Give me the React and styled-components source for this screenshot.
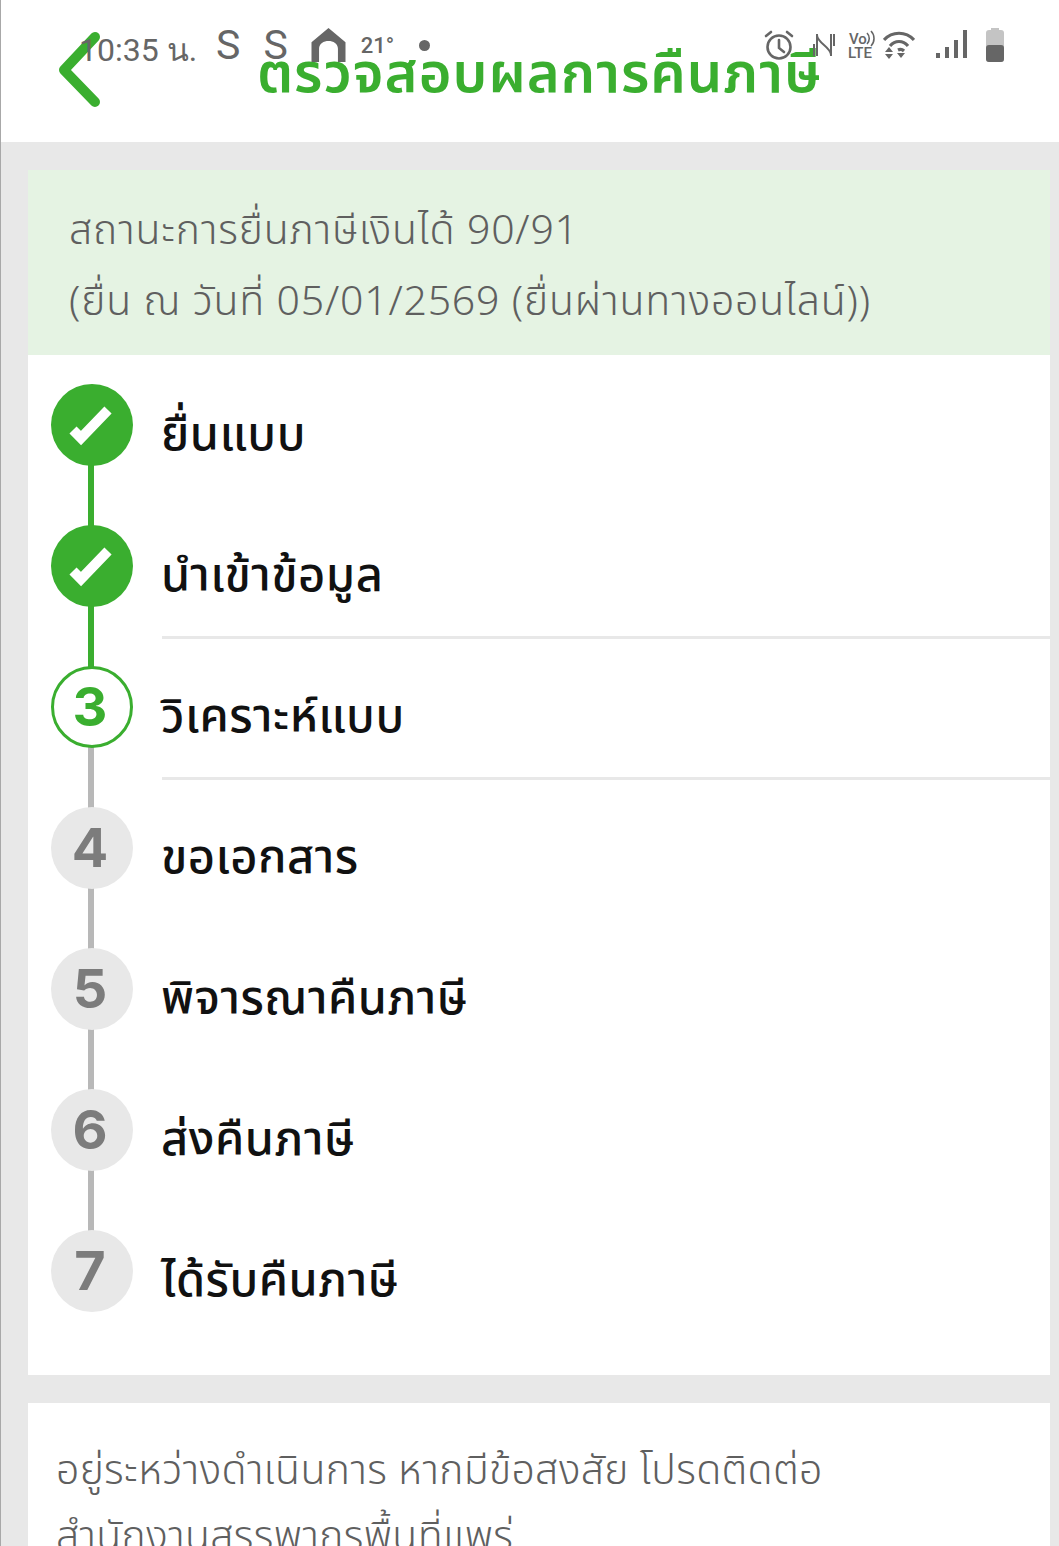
import React from 'react'
import styled, { createGlobalStyle } from 'styled-components'

const Global = createGlobalStyle`
html, body { margin: 0; padding: 0; background: #e8e8e8; }
body { font-family: "Noto Sans", "Noto Sans Thai", "Liberation Sans", sans-serif; }
`

const STEPS = [
  { label: 'ยื่นแบบ', state: 'done' },
  { label: 'นำเข้าข้อมูล', state: 'done' },
  { label: 'วิเคราะห์แบบ', state: 'current', line: true },
  { label: 'ขอเอกสาร', state: 'todo', line: true },
  { label: 'พิจารณาคืนภาษี', state: 'todo' },
  { label: 'ส่งคืนภาษี', state: 'todo' },
  { label: 'ได้รับคืนภาษี', state: 'todo' },
]

const Page = styled.div`
  position: relative;
  width: 1059px;
  height: 1546px;
  overflow: hidden;
  box-sizing: border-box;
  border-left: 1px solid #a8a8a8;
`
const Header = styled.header`
  height: 142px;
  background: #fff;
  display: flex;
  align-items: center;
  justify-content: center;
  position: relative;
`
const Back = styled.svg`
  position: absolute;
  left: 55px;
  top: 30px;
`
const Title = styled.h1`
  margin: 0 0 0 19px;
  font-size: 56px;
  line-height: 1.2;
  font-weight: 600;
  letter-spacing: 1px;
  color: #3aae2f;
`
const StatusBar = styled.div`
  position: absolute;
  top: 20px;
  left: 78px;
  right: 55px;
  height: 50px;
  display: flex;
  align-items: center;
  color: #666;
`
const Time = styled.span`
  font-family: Roboto, sans-serif;
  font-size: 32px;
  margin: 8px 19px 0 0;
  white-space: nowrap;
`
const Letter = styled.span`
  font-family: Roboto, sans-serif;
  font-size: 41px;
  margin-right: 23px;
`
const Temp = styled.span`
  font-family: Roboto, sans-serif;
  font-size: 22px;
  font-weight: 500;
  margin: 0 25px 0 15px;
`
const Dot = styled.span`
  width: 11px;
  height: 11px;
  border-radius: 50%;
  background: #666;
`
const Spacer = styled.div`
  flex: 1;
`
const Icons = styled.div`
  display: flex;
  align-items: center;
  gap: 8px;
`
const Content = styled.main`
  padding: 28px 9px 0 27px;
  display: flex;
  flex-direction: column;
  gap: 28px;
`
const Panel = styled.section`
  background: #fff;
`
const StatusBox = styled.div`
  background: #e5f3e3;
  height: 185px;
  box-sizing: border-box;
  padding: 23px 0 0 41px;
  color: #5f5f5f;
  font-size: 41px;
  line-height: 71px;
  font-weight: 300;
  letter-spacing: 0.8px;
`
const StepList = styled.ol`
  list-style: none;
  margin: -1px 0 0;
  padding: 0 0 34px 23px;
`
const Step = styled.li`
  height: 141px;
  display: flex;
  align-items: center;
  gap: 28px;
  position: relative;
`
const Circle = styled.div`
  position: relative;
  width: 82px;
  height: 82px;
  flex: none;
  box-sizing: border-box;
  border-radius: 50%;
  display: flex;
  align-items: center;
  justify-content: center;
  padding-right: 4px;
  font-family: Inter, sans-serif;
  font-size: 54px;
  font-weight: 700;
  background: ${p => (p.$state === 'done' ? '#3aae2f' : p.$state === 'current' ? '#fff' : '#e8e8e8')};
  border: ${p => (p.$state === 'current' ? '3px solid #3aae2f' : 'none')};
  color: ${p => (p.$state === 'current' ? '#3aae2f' : '#7c7c7c')};
  z-index: 1;
`
const Connector = styled.div`
  position: absolute;
  left: 37px;
  top: 110px;
  width: 6px;
  height: 62px;
  background: ${p => (p.$green ? '#3aae2f' : '#b8b8b8')};
`
const Label = styled.div`
  font-size: 47px;
  font-weight: 500;
  letter-spacing: 0.5px;
  color: #111;
  padding-top: 22px;
`
const Divider = styled.div`
  position: absolute;
  left: 111px;
  right: 0;
  top: 0;
  height: 3px;
  background: #e8e8e8;
`
const Note = styled.div`
  padding: 32px 28px;
  color: #5f5f5f;
  font-size: 41px;
  font-weight: 300;
  letter-spacing: 0.3px;
  line-height: 66px;
`

const Check = () => (
  <svg width="48" height="48" viewBox="0 0 48 48">
    <path d="M7 29 L15 37 L42 9" fill="none" stroke="#fff" strokeWidth="10" />
  </svg>
)

const StatusIcons = () => (
  <Icons>
    <svg width="32" height="32" viewBox="0 0 32 32" fill="none" stroke="#666" strokeWidth="2.6">
      <circle cx="16" cy="18" r="11.5" />
      <path d="M16 11v8l5 4M3 7l5-4M29 7l-5-4" strokeLinecap="round" />
    </svg>
    <svg width="24" height="30" viewBox="0 0 24 30" fill="none" stroke="#666" strokeWidth="2" style={{ marginLeft: 9 }}>
      <path d="M5 4v22M19 4v22M5 5c0 8 14 12 14 20M2 14v12M22 4v12" />
    </svg>
    <svg width="30" height="30" viewBox="0 0 30 30" style={{ marginLeft: 4, marginRight: -3 }}>
      <text x="1" y="14" fontSize="15" fontFamily="Roboto" fontWeight="500" fill="#666">Vo</text>
      <path d="M19 3c3 3 3 8 0 11M23 1c4 4 4 11 0 15" fill="none" stroke="#666" strokeWidth="1.6" />
      <text x="0" y="28" fontSize="15" fontFamily="Roboto" fontWeight="500" fill="#666">LTE</text>
    </svg>
    <svg width="32" height="30" viewBox="0 0 32 30" fill="none" stroke="#666" strokeWidth="3.2">
      <path d="M1 10 C9 1 23 1 31 10M7 16 C12 10 20 10 25 16M15 20 C17 19 19 19 21 21" />
      <path d="M2 22l4-5 4 5zM2 24l4 5 4-5zM14 23h8l-4 5z" fill="#666" stroke="none" />
    </svg>
    <svg width="34" height="30" viewBox="0 0 34 30" fill="#666" style={{ marginLeft: 12 }}>
      <rect x="1" y="23" width="4" height="5" />
      <rect x="10" y="17" width="4" height="11" />
      <rect x="19" y="10" width="4" height="18" />
      <rect x="28" y="0" width="4" height="28" />
    </svg>
    <svg width="18" height="34" viewBox="0 0 18 34" style={{ marginLeft: 9 }}>
      <rect x="0" y="2" width="18" height="32" rx="3" fill="#c4c4c4" />
      <rect x="0" y="17" width="18" height="17" rx="3" fill="#666" />
      <rect x="5" y="0" width="8" height="3" fill="#c4c4c4" />
    </svg>
  </Icons>
)

export default function App() {
  return (
    <>
      <Global />
      <Page>
        <Header>
          <Back width="60" height="90" viewBox="0 0 60 90">
            <path d="M39 7 L8 40 L39 72" fill="none" stroke="#3aae2f" strokeWidth="10" strokeLinecap="round" strokeLinejoin="round" />
          </Back>
          <Title>ตรวจสอบผลการคืนภาษี</Title>
          <StatusBar>
            <Time>10:35 น.</Time>
            <Letter>S</Letter>
            <Letter>S</Letter>
            <svg width="35" height="34" viewBox="0 0 36 36">
              <path d="M0 15 L18 0 L36 15 V36 H28 V22 C28 11 8 11 8 22 V36 H0 Z" fill="#666" />
            </svg>
            <Temp>21°</Temp>
            <Dot />
            <Spacer />
            <StatusIcons />
          </StatusBar>
        </Header>
        <Content>
          <Panel>
            <StatusBox>
              สถานะการยื่นภาษีเงินได้ 90/91
              <br />
              (ยื่น ณ วันที่ 05/01/2569 (ยื่นผ่านทางออนไลน์))
            </StatusBox>
            <StepList>
              {STEPS.map((step, i) => (
                <Step key={step.label}>
                  {step.line && <Divider />}
                  <Circle $state={step.state}>
                    {step.state === 'done' ? <Check /> : i + 1}
                  </Circle>
                  {i < STEPS.length - 1 && <Connector $green={step.state === 'done'} />}
                  <Label>{step.label}</Label>
                </Step>
              ))}
            </StepList>
          </Panel>
          <Panel>
            <Note>
              อยู่ระหว่างดำเนินการ หากมีข้อสงสัย โปรดติดต่อ
              <br />
              สำนักงานสรรพากรพื้นที่แพร่
            </Note>
          </Panel>
        </Content>
      </Page>
    </>
  )
}
